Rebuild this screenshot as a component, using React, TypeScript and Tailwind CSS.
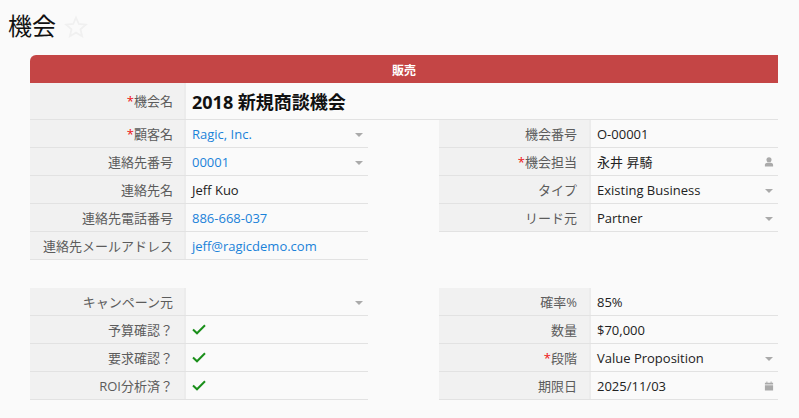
import React from "react";

function Caret() {
  return (
    <svg width="8" height="4" viewBox="0 0 8 4" className="absolute right-[5px] top-[13px]">
      <path d="M0 0H8L4 4Z" fill="#aaaaaa" />
    </svg>
  );
}

function Person() {
  return (
    <svg width="10" height="10" viewBox="0 0 10 11" className="absolute right-[4px] top-[9px]">
      <circle cx="5" cy="3" r="2.8" fill="#aaaaaa" />
      <path d="M0.5 10.5V8.6C0.5 7 2 6.2 3.2 6.2H6.8C8 6.2 9.5 7 9.5 8.6V10.5Z" fill="#aaaaaa" />
    </svg>
  );
}

function Calendar() {
  return (
    <svg width="10" height="10" viewBox="0 0 10 11" className="absolute right-[4px] top-[9px]">
      <path d="M0.5 2H9.5V3.8H0.5Z M0.5 4.6H9.5V10.5H0.5Z M2.2 0.5H3.2V2H2.2Z M6.8 0.5H7.8V2H6.8Z" fill="#aaaaaa" />
    </svg>
  );
}

function Check() {
  return (
    <svg width="14" height="11" viewBox="0 0 14 11" className="-mt-[2px]">
      <path d="M1 5.5L5 9.3L13 1.3" fill="none" stroke="#1a8f1a" strokeWidth="2" />
    </svg>
  );
}

type RowProps = {
  label: string;
  req?: boolean;
  labelW: string;
  children?: React.ReactNode;
  icon?: React.ReactNode;
};

function Row({ label, req, labelW, children, icon }: RowProps) {
  return (
    <div className="flex h-[28px] border-b border-[#e2e2e2]">
      <div className={`${labelW} shrink-0 bg-[#f1f1f1] border-r-2 border-[#ececec] text-right text-[13px] leading-[29px] text-[#5c5c5c] whitespace-nowrap`}>
        {req && <span className="text-[#ee1111]">*</span>}
        {label}
      </div>
      <div className="relative flex-1 pl-[6px] pt-[2px] text-[13px] leading-[25px] text-[#222222] whitespace-nowrap flex items-center h-[27px]">
        {children}
        {icon}
      </div>
    </div>
  );
}

const L = "w-[156px] pr-[11px]";
const R = "w-[152px] pr-[12px]";

function Link({ children }: { children: React.ReactNode }) {
  return <span className="text-[#1a82d9]">{children}</span>;
}

export default function App() {
  return (
    <div
      className="w-[799px] h-[418px] overflow-hidden bg-[#fafafa]"
      style={{ fontFamily: '"Open Sans", "Noto Sans CJK JP", sans-serif' }}
    >
      <div className="flex items-center h-[55px] pl-[8px] pb-[3px]">
        <span className="text-[24px] leading-none text-[#111111]">機会</span>
        <svg width="24" height="24" viewBox="0 0 24 24" className="ml-[8px] mt-[2px]">
          <path d="M12 2.5L14.8 9L21.8 9.7L16.5 14.3L18.1 21.2L12 17.6L5.9 21.2L7.5 14.3L2.2 9.7L9.2 9Z" fill="none" stroke="#f0f0f0" strokeWidth="1.8" />
        </svg>
      </div>
      <div className="ml-[30px] w-[748px]">
        <div className="h-[28px] bg-[#c44545] rounded-tl-[6px] text-center text-white text-[12px] font-bold leading-[32px]">
          販売
        </div>
        <div className="flex h-[37px] border-b border-[#e2e2e2]">
          <div className="w-[156px] shrink-0 bg-[#f1f1f1] border-r-2 border-[#ececec] text-right pr-[11px] text-[13px] leading-[37px] text-[#5c5c5c]">
            <span className="text-[#ee1111]">*</span>機会名
          </div>
          <div className="pl-[6px] text-[18px] font-bold leading-[38px] text-[#111111]">2018 新規商談機会</div>
        </div>
        <div className="flex gap-[71px]">
          <div className="w-[338px]">
            <Row label="顧客名" req labelW={L} icon={<Caret />}><Link>Ragic, Inc.</Link></Row>
            <Row label="連絡先番号" labelW={L} icon={<Caret />}><Link>00001</Link></Row>
            <Row label="連絡先名" labelW={L}>Jeff Kuo</Row>
            <Row label="連絡先電話番号" labelW={L}><Link>886-668-037</Link></Row>
            <Row label="連絡先メールアドレス" labelW={L}><Link>jeff@ragicdemo.com</Link></Row>
          </div>
          <div className="flex-1">
            <Row label="機会番号" labelW={R}>O-00001</Row>
            <Row label="機会担当" req labelW={R} icon={<Person />}>永井 昇騎</Row>
            <Row label="タイプ" labelW={R} icon={<Caret />}>Existing Business</Row>
            <Row label="リード元" labelW={R} icon={<Caret />}>Partner</Row>
          </div>
        </div>
        <div className="flex gap-[71px] mt-[28px]">
          <div className="w-[338px]">
            <Row label="キャンペーン元" labelW={L} icon={<Caret />} />
            <Row label="予算確認？" labelW={L}><Check /></Row>
            <Row label="要求確認？" labelW={L}><Check /></Row>
            <Row label="ROI分析済？" labelW={L}><Check /></Row>
          </div>
          <div className="flex-1">
            <Row label="確率%" labelW={R}>85%</Row>
            <Row label="数量" labelW={R}>$70,000</Row>
            <Row label="段階" req labelW={R} icon={<Caret />}>Value Proposition</Row>
            <Row label="期限日" labelW={R} icon={<Calendar />}>2025/11/03</Row>
          </div>
        </div>
      </div>
    </div>
  );
}
